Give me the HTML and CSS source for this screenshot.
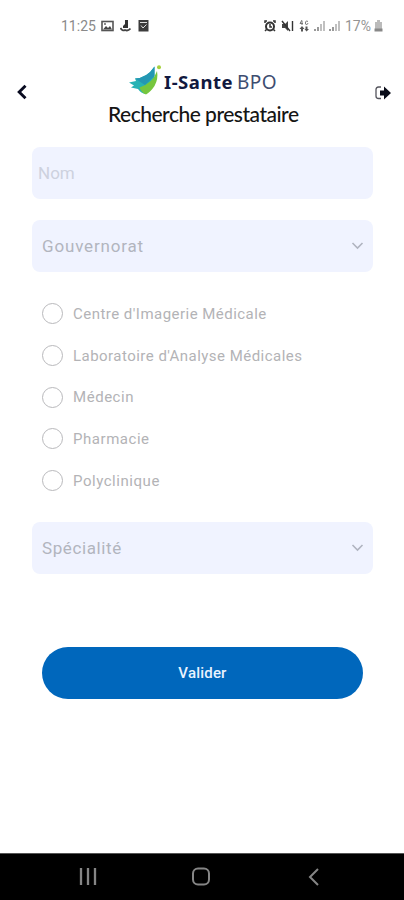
FILE: index.html
```html
<!DOCTYPE html>
<html lang="fr">
<head>
<meta charset="utf-8">
<title>Recherche prestataire</title>
<link rel="stylesheet" href="styles.css">
</head>
<body>
<div class="status">
  <div class="group">
    <span class="clock">11:25</span>
    <svg class="i-pic" width="13" height="12" viewBox="0 0 13 12"><rect x="1" y="1.500" width="11" height="9" fill="none" stroke="#555" stroke-width="1.600"/><path d="M2 9.500l3-3.500 2 2 2-2 2 3.500z" fill="#444"/><circle cx="4" cy="4" r=".9" fill="#555"/></svg>
    <svg class="i-app" width="11" height="12" viewBox="0 0 11 12"><path d="M5 0h3v8H3V6l2-2z" fill="#333"/><path d="M.5 8q2 3.500 4.500 2 3 1.500 5.500-1.500" fill="none" stroke="#444" stroke-width="1.800"/></svg>
    <svg class="i-check" width="11" height="12" viewBox="0 0 11 12"><path d="M.5 0h10v11.500H.5z" fill="#3c3c3c"/><path d="M3 5.500l2 2.500L8.500 4.500M2 2.500h7" fill="none" stroke="#ddd" stroke-width="1"/></svg>
  </div>
  <div class="group right">
    <svg width="12" height="12" viewBox="0 0 12 12"><circle cx="6" cy="6.500" r="4" fill="none" stroke="#333" stroke-width="2"/><path d="M1 3V1h2M9 1h2v2M6 4v3h2M2.500 9.500L1 11M9.500 9.500L11 11" fill="none" stroke="#333" stroke-width="1.500"/></svg>
    <svg class="i-mute" width="13" height="12" viewBox="0 0 13 12"><path d="M1 4h3l3-3v10L4 8H1z" fill="#444"/><path d="M1 1l8 10M11.500 1v10" stroke="#333" stroke-width="1.400"/></svg>
    <svg class="i-data" width="10" height="12" viewBox="0 0 10 12"><path d="M3 0L1 3.500h3M3 1v4M9 1.500Q6.500 0 6.500 3T9 3.500V3" fill="none" stroke="#777" stroke-width="1"/><path d="M3 6L.5 9H2v2.500h2V9h1.500zM7.500 11.500L10 9H8.500V6.500h-2V9H5.500z" fill="#555"/></svg>
    <svg class="i-sig" width="12" height="12" viewBox="0 0 12 12"><path d="M1 9h2v2H1zM4 7h2v4H4z" fill="#999"/><path d="M7 4h2v7H7zM10 1h2v10h-2z" fill="#c0c0c0"/></svg>
    <svg class="i-sig2" width="12" height="12" viewBox="0 0 12 12"><path d="M1 9h2v2H1zM4 7h2v4H4z" fill="#999"/><path d="M7 4h2v7H7zM10 1h2v10h-2z" fill="#c0c0c0"/></svg>
    <span class="pct">17%</span>
    <svg width="9" height="12" viewBox="0 0 9 12"><path d="M1 2h2V0h3v2h2v7H1z" fill="#bbb"/><path d="M.5 8.500h8v3h-8z" fill="#888"/></svg>
  </div>
</div>
<header class="head">
  <svg class="back" width="12" height="18" viewBox="0 0 12 18"><path d="M9.500 2.800L3.200 9l6.300 6.200" fill="none" stroke="#090b20" stroke-width="2.900"/></svg>
  <div class="brand">
    <div class="logo">
      <svg width="33" height="31" viewBox="0 0 33 31"><path d="M0 17.500L7 16 6 13.500Q18 13 25.500 1.500V13L17 29Q12 28.500 9 24L2 22.500 5 20.500z" fill="#27b3b5"/><path d="M6 13.500Q18 13 25.500 1.500V11L16 20z" fill="#2497b3"/><path d="M10.500 22.500Q24 18 28 6Q29.500 14 25.500 21 21.500 27 17 29.500 12.500 28 10.500 22.500z" fill="#76c63e"/><circle cx="30" cy="2.200" r="2" fill="#a6d13c"/></svg>
      <span class="name">I-Sante</span><span class="bpo">BPO</span>
    </div>
    <h1 class="title">Recherche prestataire</h1>
  </div>
  <svg class="exit" width="18" height="16" viewBox="0 0 18 16"><path d="M7 2H4.500Q2 2 2 4.500v6.500Q2 13.500 4.500 13.500H7" fill="none" stroke="#55555d" stroke-width="1.300"/><path d="M6 5.500h4V1.500L17 8l-7 6.500v-4H6z" fill="#090b18"/></svg>
</header>
<main class="form">
  <div class="field nom"><span>Nom</span></div>
  <div class="field select"><span class="gouv">Gouvernorat</span><svg width="13" height="8" viewBox="0 0 13 8"><path d="M1.500 1l5 5 5-5" fill="none" stroke="#b0b4c0" stroke-width="1.600"/></svg></div>
  <div class="options">
    <label class="option"><i></i><span>Centre d'Imagerie Médicale</span></label>
    <label class="option"><i></i><span>Laboratoire d'Analyse Médicales</span></label>
    <label class="option"><i></i><span class="loose">Médecin</span></label>
    <label class="option"><i></i><span class="loose">Pharmacie</span></label>
    <label class="option"><i></i><span class="loose">Polyclinique</span></label>
  </div>
  <div class="field select"><span class="spec">Spécialité</span><svg width="13" height="8" viewBox="0 0 13 8"><path d="M1.500 1l5 5 5-5" fill="none" stroke="#b0b4c0" stroke-width="1.600"/></svg></div>
  <button class="submit">Valider</button>
</main>
<nav class="nav">
  <svg width="18" height="18" viewBox="0 0 18 18"><path d="M2 0v17M9 0v17M16 0v17" stroke="#858585" stroke-width="2.300"/></svg>
  <svg class="home" width="20" height="20" viewBox="0 0 20 20"><rect x="2" y="1.500" width="16" height="16" rx="5" fill="none" stroke="#858585" stroke-width="2"/></svg>
  <svg width="12" height="18" viewBox="0 0 12 18"><path d="M10 1L2 9l8 8" fill="none" stroke="#858585" stroke-width="2"/></svg>
</nav>
</body>
</html>
```
FILE: styles.css
```css
* { box-sizing: border-box; }
body {
  margin: 0;
  width: 404px;
  height: 900px;
  display: flex;
  flex-direction: column;
  background: #fff;
  font-family: Roboto, sans-serif;
  overflow: hidden;
}
svg { display: block; flex: none; }
span { white-space: nowrap; }
.status {
  height: 51px;
  padding: 0 21px 0 61px;
  display: flex;
  justify-content: space-between;
  align-items: center;
  color: #777;
}
.group { display: flex; align-items: center; height: 20px; }
.clock { width: 35px; margin-right: 5px; font-size: 14px; color: #8a8a8a; }
.i-app { margin-left: 6px; }
.i-check { margin-left: 7px; }
.i-mute { margin-left: 5px; }
.i-data { margin-left: 5px; }
.i-sig { margin-left: 4px; }
.i-sig2 { margin-left: 3px; }
.pct { width: 29px; margin-left: 5px; font-size: 14px; color: #949494; }
.head {
  height: 96px;
  padding: 14px 12px 0 16px;
  display: flex;
  justify-content: space-between;
}
.back { margin-top: 18px; }
.exit { margin-top: 20px; }
.brand { width: 192px; margin-left: 6px; }
.logo { display: flex; height: 34px; padding-left: 21px; align-items: flex-start; }
.name {
  margin: 3px 0 0 2px;
  width: 73px;
  font: 700 18.500px/28px "Noto Sans", sans-serif;
  letter-spacing: .5px;
  color: #11193f;
}
.bpo { margin-top: 3px; font: 400 19px/28px "Noto Sans", sans-serif; letter-spacing: .5px; color: #3d4d70; }
.title {
  margin: 2px 0 0;
  font: 500 21px/26px Lato, sans-serif;
  letter-spacing: -.5px;
  color: #151515;
  white-space: nowrap;
}
.form { flex: 1; padding: 0 31px 0 32px; display: flex; flex-direction: column; }
.field {
  height: 52px;
  flex: none;
  border-radius: 8px;
  background: #f0f3ff;
  display: flex;
  align-items: center;
  font-size: 17px;
  color: #b2b5be;
}
.nom { padding-left: 6px; margin-bottom: 21px; color: #cdd1de; }
.select { padding: 0 9px 0 10px; justify-content: space-between; }
.gouv { letter-spacing: .83px; }
.spec { letter-spacing: .6px; }
.options { padding: 21px 0 0 10px; height: 250px; }
.option { height: 41.700px; display: flex; align-items: center; font-size: 15px; color: #b3b3b6; }
.option i { width: 21px; height: 21px; margin-right: 10px; border: 1.500px solid #b9b9bc; border-radius: 50%; }
.option span { letter-spacing: .47px; }
.option .loose { letter-spacing: .54px; }
.submit {
  height: 52px;
  margin: 73px 10px 0;
  padding: 0;
  border: 0;
  border-radius: 26px;
  background: #0067bc;
  color: #e9f3ff;
  font: 500 15px Roboto, sans-serif;
  letter-spacing: .2px;
}
.nav {
  height: 47px;
  padding: 0 84px 0 79px;
  border-top: 1px solid #555;
  background: #000;
  display: flex;
  align-items: center;
  justify-content: space-between;
}
.home { margin-right: 4px; }
```
